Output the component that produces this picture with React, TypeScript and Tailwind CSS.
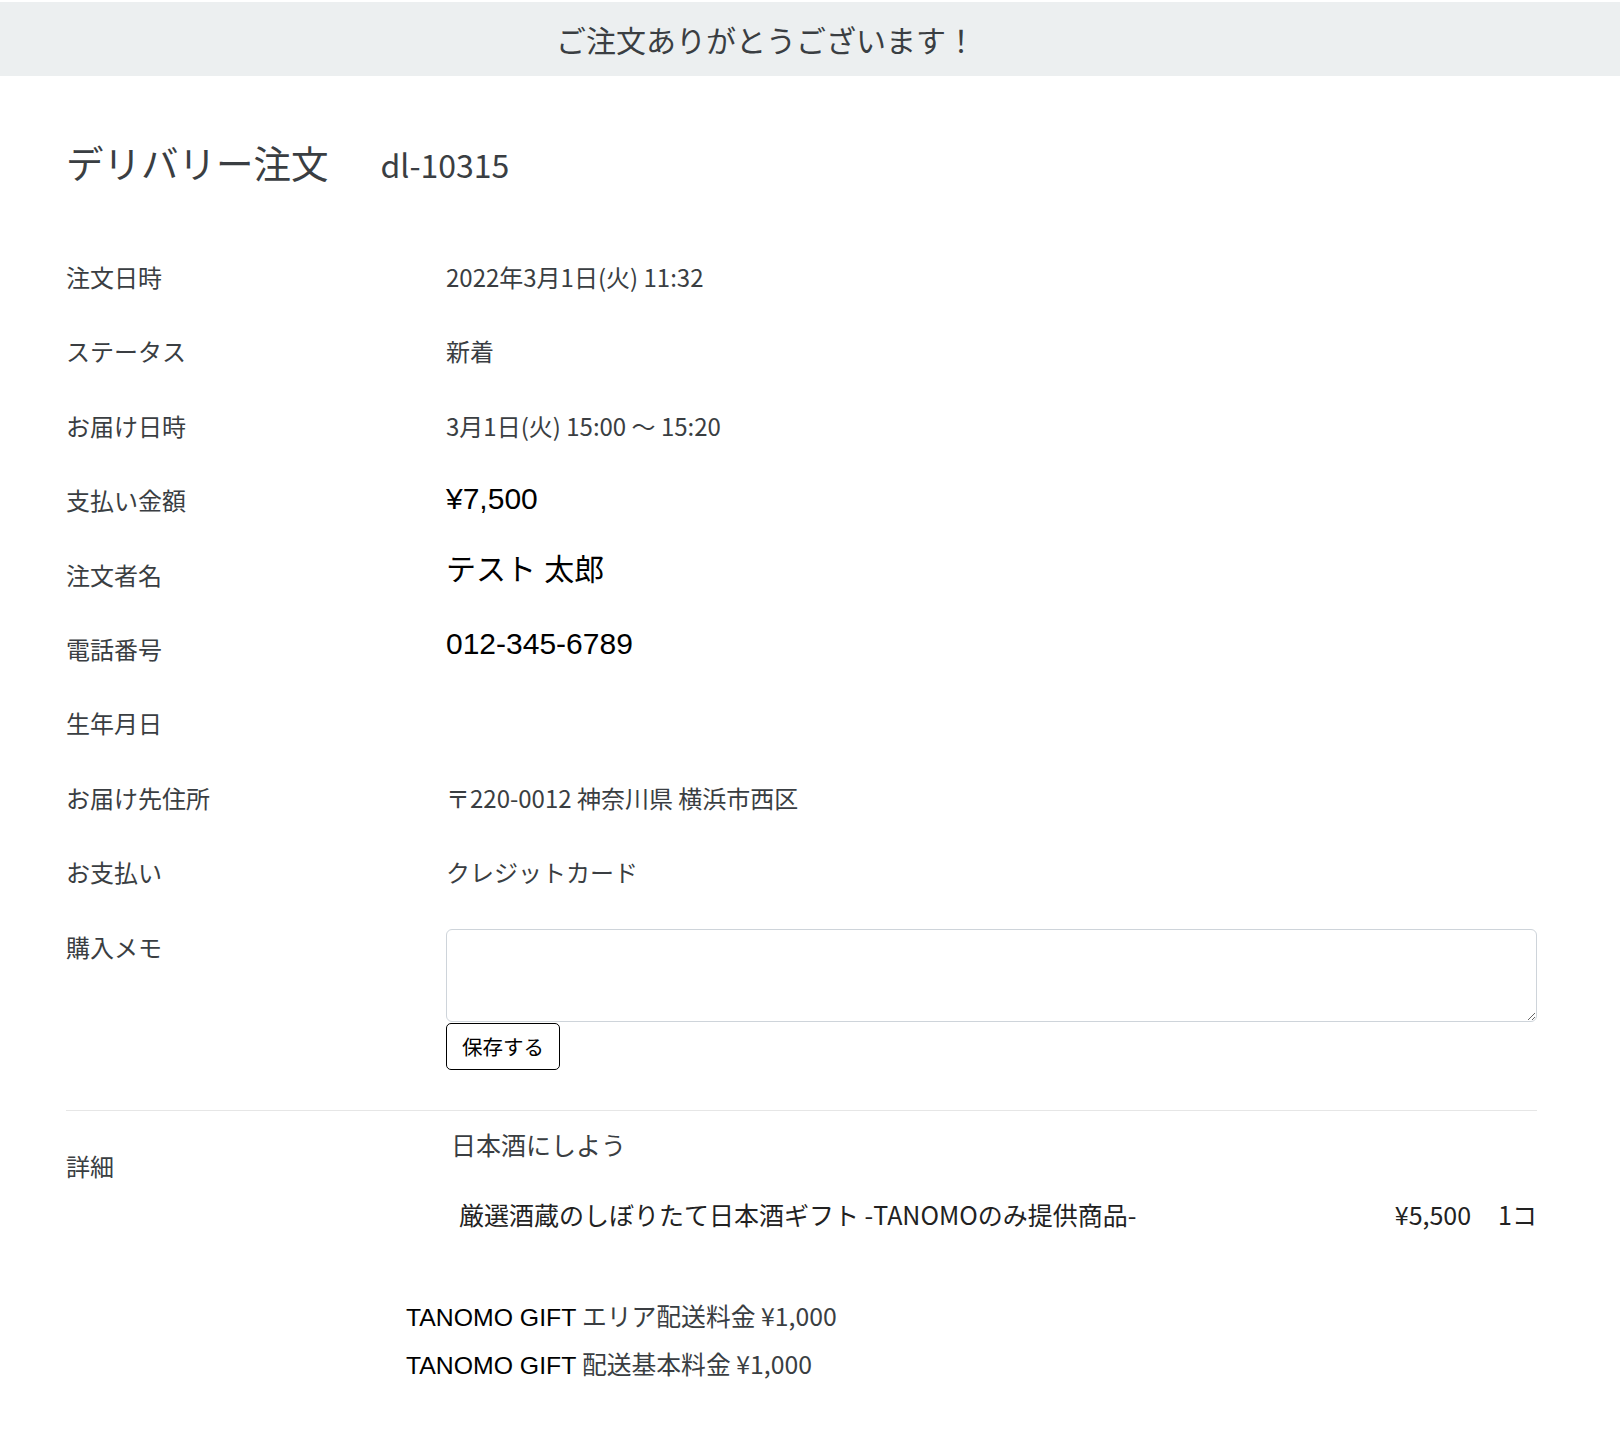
import React from 'react';

const jp = { fontFamily: '"Noto Sans CJK JP", "Noto Sans", sans-serif' };
const en = { fontFamily: '"Liberation Sans", "Noto Sans CJK JP", sans-serif' };

type Row = { label: string; value?: React.ReactNode };

const rows: Row[] = [
  { label: '注文日時', value: '2022年3月1日(火) 11:32' },
  { label: 'ステータス', value: '新着' },
  { label: 'お届け日時', value: '3月1日(火) 15:00 〜 15:20' },
  {
    label: '支払い金額',
    value: (
      <span className="block text-[30px] leading-[34px] text-black" style={en}>
        ¥7,500
      </span>
    ),
  },
  {
    label: '注文者名',
    value: (
      <span className="block text-[30px] leading-[26px] text-black" style={en}>
        テスト 太郎
      </span>
    ),
  },
  {
    label: '電話番号',
    value: (
      <span className="block text-[30px] leading-[25px] text-black" style={en}>
        012-345-6789
      </span>
    ),
  },
  { label: '生年月日' },
  { label: 'お届け先住所', value: '〒220-0012 神奈川県 横浜市西区' },
  { label: 'お支払い', value: 'クレジットカード' },
];

const App: React.FC = () => {
  return (
    <div className="min-h-screen bg-white pt-[2px] text-[#3a3e42]" style={jp}>
      {/* Thanks banner */}
      <div className="flex h-[74px] items-center justify-center bg-[#eceff0] pr-[88px]">
        <h1 className="text-[30px] leading-none">ご注文ありがとうございます！</h1>
      </div>

      <div className="pl-[66px] pr-[83px]">
        {/* Title */}
        <div className="mt-[64px] flex items-baseline">
          <h2 className="text-[37.5px] leading-[43px]">デリバリー注文</h2>
          <span className="ml-[52px] text-[32px] leading-[43px]">dl-10315</span>
        </div>

        {/* Order info */}
        <div className="mt-[73px]">
          {rows.map((r) => (
            <div key={r.label} className="grid h-[74.4px] grid-cols-[380px_1fr] items-start">
              <div className="text-[24px] leading-[36px]">{r.label}</div>
              <div className="min-h-[36px] text-[24px] leading-[36px]">{r.value}</div>
            </div>
          ))}

          <div className="grid grid-cols-[380px_1fr] items-start">
            <div className="text-[24px] leading-[36px]">購入メモ</div>
            <div>
              <textarea className="block h-[93px] w-full resize-y rounded-[6px] border border-[#ced4da] bg-white p-3 text-[24px] outline-none" />
              <button className="mt-[1px] h-[47px] rounded-[5px] border border-black bg-white px-[15px] text-[20.5px] leading-none text-black">
                保存する
              </button>
            </div>
          </div>
        </div>

        <div className="mt-[40px] border-t border-[#e6e6e6]" />

        {/* Details */}
        <div className="grid grid-cols-[380px_1fr] items-start pt-[15px]">
          <div className="mt-[22px] text-[24px] leading-[36px]">詳細</div>
          <div>
            <div className="pl-[5px] text-[25px] leading-[36px]">日本酒にしよう</div>
            <div className="mt-[34px] flex items-center pl-[13px] text-[25px] leading-[36px] text-[#222]">
              <span className="flex-1">厳選酒蔵のしぼりたて日本酒ギフト -TANOMOのみ提供商品-</span>
              <span>¥5,500</span>
              <span className="ml-[27px]">1コ</span>
            </div>
          </div>
        </div>

        {/* Shipping fees */}
        <div className="mt-[65px] pl-[340px] pb-[40px] text-[24.8px]">
          <div className="h-[48.6px] leading-[36px]">
            <span className="text-black" style={en}>TANOMO GIFT</span> エリア配送料金 ¥1,000
          </div>
          <div className="h-[48.6px] leading-[36px]">
            <span className="text-black" style={en}>TANOMO GIFT</span> 配送基本料金 ¥1,000
          </div>
        </div>
      </div>
    </div>
  );
};

export default App;
